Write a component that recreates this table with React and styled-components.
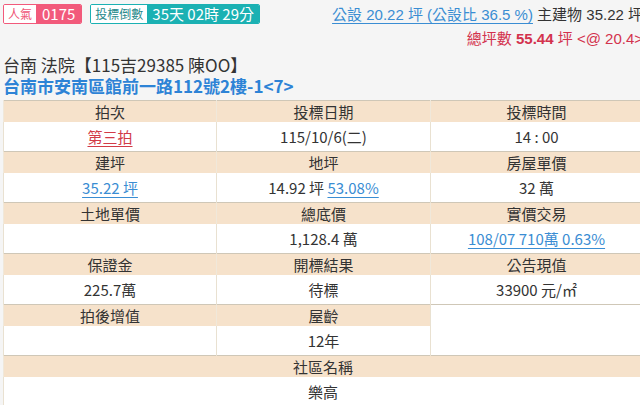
import React from "react";
import styled, { createGlobalStyle } from "styled-components";

const Global = createGlobalStyle`
  html, body { margin: 0; padding: 0; background: #f5f5f5; overflow: hidden; }
  body { font-family: "Noto Sans CJK TC", "Noto Sans", sans-serif; color: #333; }
`;

const Page = styled.div`
  width: 640px;
  margin-left: 3px;
  padding-top: 4px;
`;

const TopBar = styled.div`
  display: flex;
  justify-content: space-between;
  align-items: flex-start;
  height: 50px;
`;

const Badges = styled.div`
  display: flex;
  gap: 8px;
`;

const Badge = styled.div`
  display: flex;
  height: 20px;
  border: 1px solid ${(p) => p.$color};
  border-radius: 2px;
  box-sizing: border-box;
  overflow: hidden;
`;

const BadgeLabel = styled.span`
  display: flex;
  align-items: center;
  padding: 0 4px;
  background: #fff;
  color: ${(p) => p.$color};
  font-size: 12px;
  line-height: 18px;
`;

const BadgeValue = styled.span`
  display: flex;
  align-items: center;
  padding: 0 ${(p) => p.$pad}px;
  background: ${(p) => p.$color};
  color: #fff;
  font-size: ${(p) => p.$size}px;
  line-height: 18px;
`;

const Summary = styled.div`
  display: flex;
  flex-direction: column;
  align-items: flex-end;
  font-family: "Liberation Sans", "Noto Sans CJK TC", sans-serif;
  font-size: 15px;
  line-height: 22px;
  white-space: nowrap;
`;

const SummaryLine = styled.div`
  color: ${(p) => p.$color || "#333"};
  margin-top: ${(p) => p.$mt || 0}px;
`;

const Link = styled.span`
  color: ${(p) => p.$color || "#3a8dd3"};
  text-decoration: underline;
  text-underline-offset: 3px;
  text-decoration-thickness: 1px;
`;

const Strong = styled.b`
  font-weight: 700;
`;

const Title = styled.div`
  margin-top: 1px;
  font-size: 17px;
  line-height: 20px;
  color: #333;
`;

const Address = styled.div`
  margin-top: 1px;
  font-size: 17px;
  line-height: 20px;
  font-weight: 700;
  color: #2d83d6;
`;

const Table = styled.table`
  margin-top: 4px;
  width: 640px;
  border-collapse: collapse;
  table-layout: fixed;
  background: #fff;
  border: 1px solid #c9c1b1;
`;

const HeadRow = styled.tr`
  background: #f6e2cb;
  border-top: 1px solid #cfc7b7;
`;

const Th = styled.td`
  height: 21px;
  padding: 0;
  text-align: center;
  font-size: 15px;
  line-height: 20px;
  color: #333;
  border-left: 1px solid #f0e8da;
`;

const Td = styled.td`
  height: 29px;
  padding: 0;
  text-align: center;
  font-size: 15px;
  line-height: 28px;
  color: #333;
  background: #fff;
  border-left: 1px solid #e9e1d1;
  vertical-align: middle;
`;

const pairs = [
  {
    heads: ["拍次", "投標日期", "投標時間"],
    vals: [
      <Link $color="#d23b47">第三拍</Link>,
      "115/10/6(二)",
      "14 : 00",
    ],
  },
  {
    heads: ["建坪", "地坪", "房屋單價"],
    vals: [
      <Link>35.22 坪</Link>,
      <>14.92 坪 <Link>53.08%</Link></>,
      "32 萬",
    ],
  },
  {
    heads: ["土地單價", "總底價", "實價交易"],
    vals: ["", "1,128.4 萬", <Link>108/07 710萬 0.63%</Link>],
  },
  {
    heads: ["保證金", "開標結果", "公告現值"],
    vals: ["225.7萬", "待標", "33900 元/㎡"],
  },
];

export default function App() {
  return (
    <>
      <Global />
      <Page>
        <TopBar>
          <Badges>
            <Badge $color="#f25a7b">
              <BadgeLabel $color="#ef5677">人氣</BadgeLabel>
              <BadgeValue $color="#f25a7b" $size={15} $pad={6}>0175</BadgeValue>
            </Badge>
            <Badge $color="#1bb1b3">
              <BadgeLabel $color="#27898b">投標倒數</BadgeLabel>
              <BadgeValue $color="#1bb1b3" $size={15} $pad={5}>35天 02時 29分</BadgeValue>
            </Badge>
          </Badges>
          <Summary>
            <SummaryLine>
              <Link>公設 20.22 坪 (公設比 36.5 %)</Link> 主建物 35.22 坪
            </SummaryLine>
            <SummaryLine $color="#d3324d" $mt={2}>
              總坪數 <Strong>55.44</Strong> 坪 &lt;@ 20.4&gt;
            </SummaryLine>
          </Summary>
        </TopBar>
        <Title>台南 法院【115吉29385 陳OO】</Title>
        <Address>台南市安南區館前一路112號2樓-1&lt;7&gt;</Address>
        <Table>
          <colgroup>
            <col style={{ width: "213px" }} />
            <col style={{ width: "214px" }} />
            <col />
          </colgroup>
          <tbody>
            {pairs.map((p, i) => (
              <React.Fragment key={i}>
                <HeadRow>
                  {p.heads.map((h) => (
                    <Th key={h}>{h}</Th>
                  ))}
                </HeadRow>
                <tr>
                  {p.vals.map((v, j) => (
                    <Td key={j}>{v}</Td>
                  ))}
                </tr>
              </React.Fragment>
            ))}
            <HeadRow>
              <Th>拍後增值</Th>
              <Th>屋齡</Th>
              <Td rowSpan={2} />
            </HeadRow>
            <tr>
              <Td></Td>
              <Td>12年</Td>
            </tr>
            <HeadRow>
              <Th colSpan={3}>社區名稱</Th>
            </HeadRow>
            <tr>
              <Td colSpan={3}>樂高</Td>
            </tr>
          </tbody>
        </Table>
      </Page>
    </>
  );
}
